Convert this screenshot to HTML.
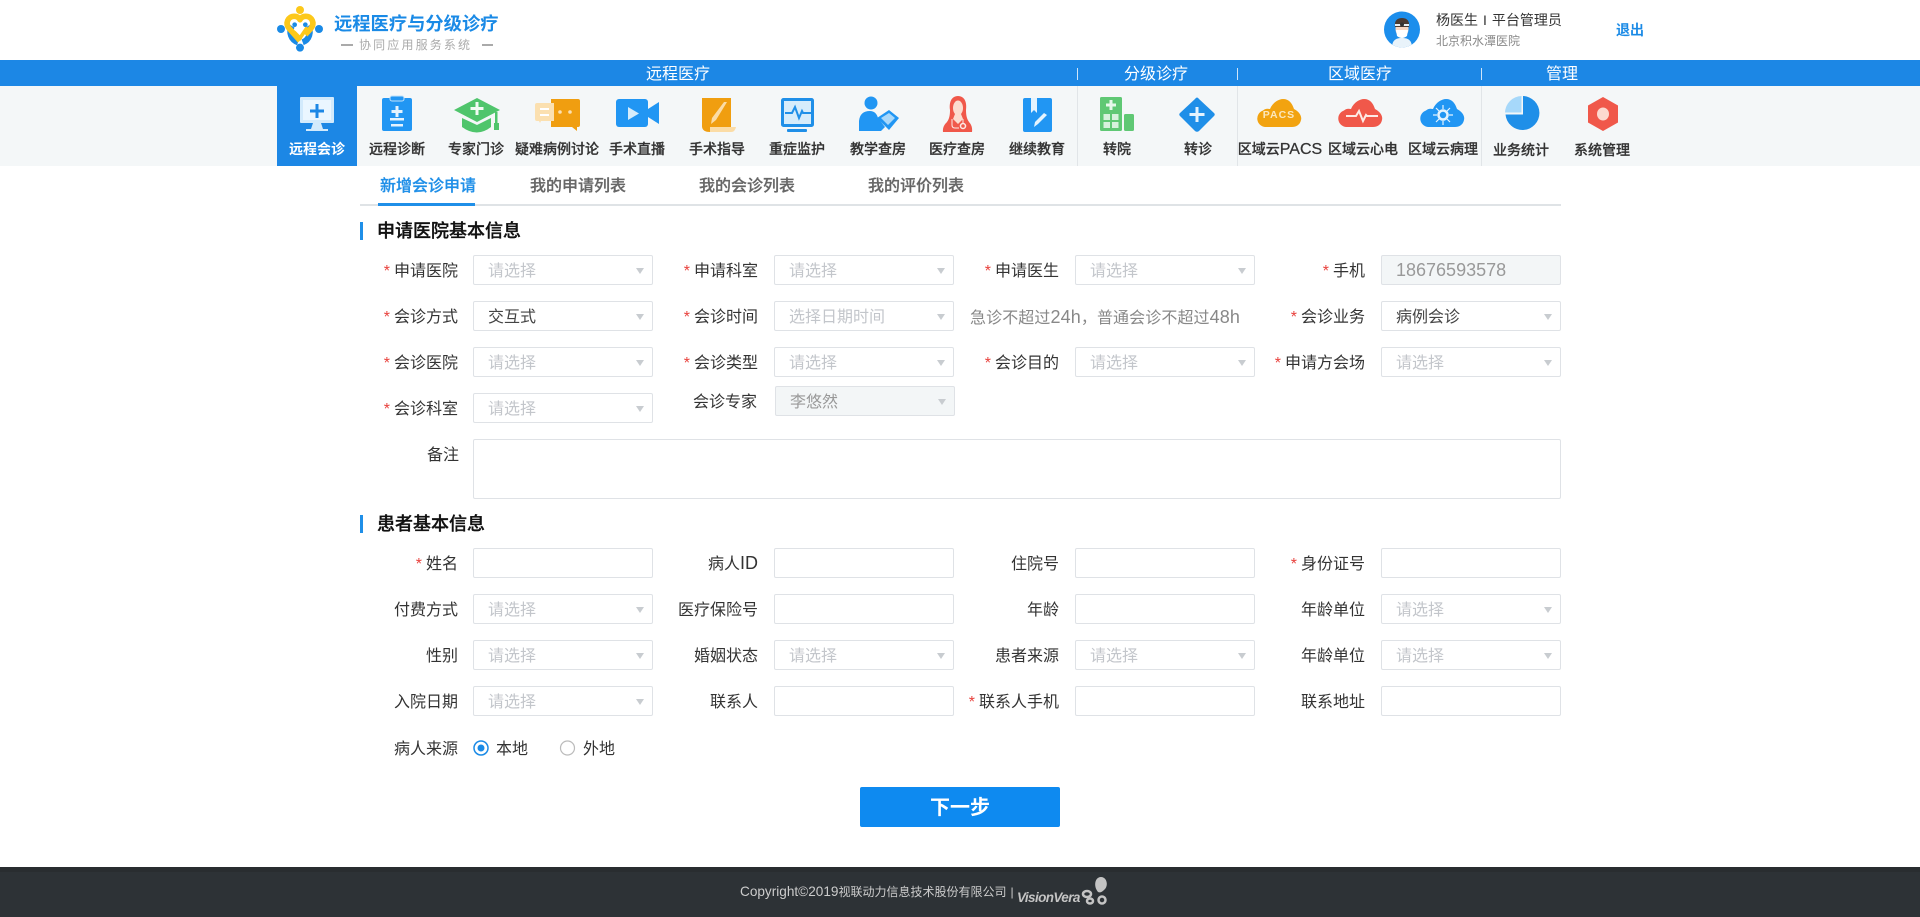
<!DOCTYPE html>
<html lang="zh-CN"><head><meta charset="utf-8"><title>远程医疗与分级诊疗</title>
<style>
*{box-sizing:border-box}
html,body{margin:0;padding:0;background:#fff}
body{width:1920px;height:917px;position:relative;overflow:hidden;font-family:"Liberation Sans","Noto Sans CJK SC",sans-serif;font-size:16px;color:#333}
.a{position:absolute;white-space:nowrap}
#bar{left:0;top:60px;width:1920px;height:26px;background:#1c87e5}
#nav{left:0;top:86px;width:1920px;height:80px;background:#f4f7f8}
#act{left:277px;top:86px;width:80px;height:80px;background:#1c87e5}
.sep{position:absolute;width:1px;background:#e1e5e8;top:86px;height:80px}
.bs{position:absolute;width:1px;background:#cfe5f9;top:68px;height:12px}
.rg{position:absolute;top:60px;height:26px;line-height:29px;color:#fff;font-size:16px;width:100px;text-align:center}
.n{position:absolute;top:139px;height:20px;line-height:20px;width:90px;text-align:center;font-size:14px;font-weight:500;color:#333;white-space:nowrap;-webkit-text-stroke:.25px #333}
.n b{font-weight:500;font-size:16px}
.t{position:absolute;top:175px;line-height:24px;font-size:16px;color:#666;font-weight:500;white-space:nowrap;-webkit-text-stroke:.25px currentColor}
.h{position:absolute;left:377px;font-size:18px;line-height:24px;color:#111;font-weight:500;white-space:nowrap;-webkit-text-stroke:.35px #111}
.hb{position:absolute;left:360px;width:3px;height:18px;background:#1f8fe8}
.l{position:absolute;height:30px;line-height:30px;text-align:right;white-space:nowrap;color:#333;margin-top:2px}
.l i{font-style:normal;color:#e8413c;margin-right:4px}
.l b{font-weight:400;font-size:18px;line-height:1}
.l1{left:300px;width:158px}.l2{left:600px;width:158px}.l3{left:900px;width:159px}.l4{left:1200px;width:165px}
.f{position:absolute;width:180px;height:30px;border:1px solid #dfe2e6;border-radius:2px;background:#fff;padding-left:14px;line-height:32px;color:#c3c6cb;white-space:nowrap}
.i1{left:473px}.i2{left:774px}.i3{left:1075px}.i4{left:1381px}
.v{color:#444}
.s:after{content:"";position:absolute;right:8px;top:12px;border-left:4.5px solid transparent;border-right:4.5px solid transparent;border-top:6px solid #c8ccd0}
.d{background:#f3f6f7;color:#999}
</style></head>
<body>

<div class="a" style="left:334px;top:12px;font-size:18.3px;line-height:24px;font-weight:700;color:#1a8ae6">远程医疗与分级诊疗</div>
<div class="a" style="left:359px;top:37px;font-size:12px;line-height:16px;letter-spacing:2.15px;color:#aaa">协同应用服务系统</div>
<div class="a" style="left:341px;top:44px;width:12px;height:2px;background:#aaa"></div>
<div class="a" style="left:482px;top:44px;width:11px;height:2px;background:#aaa"></div>
<div class="a" style="left:1436px;top:10px;font-size:14px;line-height:20px;color:#333">杨医生<span style="font-family:'Liberation Sans';margin:0 5px">I</span>平台管理员</div>
<div class="a" style="left:1436px;top:33px;font-size:12px;line-height:16px;color:#888">北京积水潭医院</div>
<div class="a" style="left:1616px;top:20px;font-size:14px;line-height:20px;font-weight:500;color:#1a8ae6;-webkit-text-stroke:.3px #1a8ae6">退出</div>

<div class="a" id="bar"></div>
<div class="a" id="nav"></div>
<div class="a" id="act"></div>
<div class="sep" style="left:1077px"></div><div class="sep" style="left:1237px"></div><div class="sep" style="left:1481px"></div>
<div class="bs" style="left:1077px"></div><div class="bs" style="left:1237px"></div><div class="bs" style="left:1481px"></div>
<div class="rg" style="left:628px">远程医疗</div>
<div class="rg" style="left:1106px">分级诊疗</div>
<div class="rg" style="left:1310px">区域医疗</div>
<div class="rg" style="left:1512px">管理</div>

<div class="n" style="left:272px;color:#fff;font-weight:700;-webkit-text-stroke:0">远程会诊</div>
<div class="n" style="left:352px">远程诊断</div>
<div class="n" style="left:431px">专家门诊</div>
<div class="n" style="left:512px">疑难病例讨论</div>
<div class="n" style="left:592px">手术直播</div>
<div class="n" style="left:672px">手术指导</div>
<div class="n" style="left:752px">重症监护</div>
<div class="n" style="left:833px">教学查房</div>
<div class="n" style="left:912px">医疗查房</div>
<div class="n" style="left:992px">继续教育</div>
<div class="n" style="left:1072px">转院</div>
<div class="n" style="left:1153px">转诊</div>
<div class="n" style="left:1235px">区域云<b>PACS</b></div>
<div class="n" style="left:1318px">区域云心电</div>
<div class="n" style="left:1398px">区域云病理</div>
<div class="n" style="left:1476px;top:140px">业务统计</div>
<div class="n" style="left:1557px;top:140px">系统管理</div>

<div class="a" style="left:360px;top:204px;width:1201px;height:2px;background:#dfe3e6"></div>
<div class="a" style="left:378px;top:203px;width:97px;height:3px;background:#1f8fe8"></div>
<div class="t" style="left:380px;color:#1f8fe8">新增会诊申请</div>
<div class="t" style="left:530px">我的申请列表</div>
<div class="t" style="left:699px">我的会诊列表</div>
<div class="t" style="left:868px">我的评价列表</div>

<div class="hb" style="top:222px"></div>
<div class="h" style="top:219px">申请医院基本信息</div>

<div class="l l1" style="top:255px"><i>*</i>申请医院</div><div class="f s i1" style="top:255px">请选择</div>
<div class="l l2" style="top:255px"><i>*</i>申请科室</div><div class="f s i2" style="top:255px">请选择</div>
<div class="l l3" style="top:255px"><i>*</i>申请医生</div><div class="f s i3" style="top:255px">请选择</div>
<div class="l l4" style="top:255px"><i>*</i>手机</div><div class="f d i4" style="top:255px;font-size:18px;line-height:29px">18676593578</div>

<div class="l l1" style="top:301px"><i>*</i>会诊方式</div><div class="f s i1 v" style="top:301px">交互式</div>
<div class="l l2" style="top:301px"><i>*</i>会诊时间</div><div class="f s i2" style="top:301px">选择日期时间</div>
<div class="a" style="left:970px;top:304px;line-height:30px;color:#888;letter-spacing:.1px">急诊不超过<span style="font-size:18px;line-height:1">24h</span>，普通会诊不超过<span style="font-size:18px;line-height:1">48h</span></div>
<div class="l l4" style="top:301px"><i>*</i>会诊业务</div><div class="f s i4 v" style="top:301px">病例会诊</div>

<div class="l l1" style="top:347px"><i>*</i>会诊医院</div><div class="f s i1" style="top:347px">请选择</div>
<div class="l l2" style="top:347px"><i>*</i>会诊类型</div><div class="f s i2" style="top:347px">请选择</div>
<div class="l l3" style="top:347px"><i>*</i>会诊目的</div><div class="f s i3" style="top:347px">请选择</div>
<div class="l l4" style="top:347px"><i>*</i>申请方会场</div><div class="f s i4" style="top:347px">请选择</div>

<div class="l l1" style="top:393px"><i>*</i>会诊科室</div><div class="f s i1" style="top:393px">请选择</div>
<div class="l l2" style="top:386px;left:599px">会诊专家</div><div class="f s d" style="top:386px;left:775px">李悠然</div>

<div class="l" style="left:400px;width:59px;top:439px">备注</div>
<div class="f" style="left:473px;top:439px;width:1088px;height:60px"></div>

<div class="hb" style="top:515px"></div>
<div class="h" style="top:512px">患者基本信息</div>

<div class="l l1" style="top:548px"><i>*</i>姓名</div><div class="f i1" style="top:548px"></div>
<div class="l l2" style="top:548px">病人<b>ID</b></div><div class="f i2" style="top:548px"></div>
<div class="l l3" style="top:548px">住院号</div><div class="f i3" style="top:548px"></div>
<div class="l l4" style="top:548px"><i>*</i>身份证号</div><div class="f i4" style="top:548px"></div>

<div class="l l1" style="top:594px">付费方式</div><div class="f s i1" style="top:594px">请选择</div>
<div class="l l2" style="top:594px">医疗保险号</div><div class="f i2" style="top:594px"></div>
<div class="l l3" style="top:594px">年龄</div><div class="f i3" style="top:594px"></div>
<div class="l l4" style="top:594px">年龄单位</div><div class="f s i4" style="top:594px">请选择</div>

<div class="l l1" style="top:640px">性别</div><div class="f s i1" style="top:640px">请选择</div>
<div class="l l2" style="top:640px">婚姻状态</div><div class="f s i2" style="top:640px">请选择</div>
<div class="l l3" style="top:640px">患者来源</div><div class="f s i3" style="top:640px">请选择</div>
<div class="l l4" style="top:640px">年龄单位</div><div class="f s i4" style="top:640px">请选择</div>

<div class="l l1" style="top:686px">入院日期</div><div class="f s i1" style="top:686px">请选择</div>
<div class="l l2" style="top:686px">联系人</div><div class="f i2" style="top:686px"></div>
<div class="l l3" style="top:686px"><i>*</i>联系人手机</div><div class="f i3" style="top:686px"></div>
<div class="l l4" style="top:686px">联系地址</div><div class="f i4" style="top:686px"></div>

<div class="l l1" style="top:733px">病人来源</div>
<div class="a" style="left:496px;top:735px;line-height:30px">本地</div>
<div class="a" style="left:583px;top:735px;line-height:30px">外地</div>

<div class="a" style="left:860px;top:787px;width:200px;height:40px;background:#0e8af0;border-radius:2px;color:#fff;font-size:20px;font-weight:700;text-align:center;line-height:42px">下一步</div>

<div class="a" style="left:0;top:867px;width:1920px;height:50px;background:#2d3236;border-top:5px solid #292d30"></div>
<div class="a" style="left:740px;top:882px;line-height:20px;color:#ccc;font-size:12px"><span style="font-size:13.6px">Copyright©2019</span>视联动力信息技术股份有限公司<span style="margin-left:4px">|</span></div>
<div class="a" style="left:1017px;top:889px;line-height:18px;color:#c4c4c4;font-size:13.5px;font-weight:700;font-style:italic;letter-spacing:-.6px">VisionVera</div>

<svg class="a" style="left:0;top:0;pointer-events:none" width="1920" height="917" viewBox="0 0 1920 917" xmlns="http://www.w3.org/2000/svg">
<!-- logo -->
<g transform="translate(270 0) scale(.3333)">
<circle cx="90" cy="30" r="12" fill="#fcc81a"/>
<circle cx="33" cy="87" r="12" fill="#1a8ae6"/><circle cx="147" cy="87" r="12" fill="#1a8ae6"/><circle cx="90" cy="143" r="12" fill="#1a8ae6"/>
<path d="M66 78A33 33 0 0 0 84 127M114 78A33 33 0 0 1 98 127" fill="none" stroke="#1a8ae6" stroke-width="18"/>
<path d="M90 122L58 86C44 70 54 49 73 49C81 49 87 53 90 59C93 53 99 49 107 49C126 49 136 70 122 86L106 104" fill="none" stroke="#fcc81a" stroke-width="17" stroke-linejoin="round"/>
<path d="M72 96L90 114L112 82" fill="none" stroke="#fcc81a" stroke-width="11"/>
<circle cx="74" cy="74" r="7" fill="#1a8ae6"/><circle cx="106" cy="74" r="7" fill="#1a8ae6"/>
</g>
<!-- avatar -->
<defs><clipPath id="av"><circle cx="1402" cy="29.500" r="18"/></clipPath></defs>
<circle cx="1402" cy="29.500" r="18" fill="#1c8eec"/>
<g clip-path="url(#av)">
<path d="M1392 48C1392 40 1396 38 1402 38C1408 38 1412 40 1412 48Z" fill="#e9f3fa"/>
<ellipse cx="1402" cy="29" rx="6.500" ry="8" fill="#f7d6c2"/>
<path d="M1395 27C1394 20 1398 18 1402 18C1406 18 1410 20 1409 27Z" fill="#4a3a32"/>
<rect x="1395" y="24" width="14" height="2" fill="#e6eef4"/><circle cx="1402" cy="24.500" r="2" fill="#333"/>
<path d="M1396 30L1408 30L1407 36Q1402 40 1397 36Z" fill="#fff"/>
</g>
<!-- 1 monitor active -->
<rect x="300" y="97" width="34" height="26" rx="1" fill="#d2eafc"/><rect x="303" y="100" width="28" height="20" fill="#eaf6ff"/>
<path d="M315.500 104h3v5.500h5.500v3h-5.500v5.500h-3v-5.500h-5.500v-3h5.500z" fill="#1c87e5"/>
<path d="M313 123h8l2 6h5v2h-22v-2h5z" fill="#d2eafc"/>
<!-- 2 clipboard -->
<rect x="382" y="98" width="30" height="33" rx="2" fill="#2196f3"/><rect x="390" y="96" width="14" height="5" rx="2" fill="#2196f3" stroke="#bfe1fb"/>
<path d="M395.500 106h3v4h4v3h-4v4h-3v-4h-4v-3h4z" fill="#e4f3fe"/><rect x="390" y="118" width="14" height="2.500" fill="#e4f3fe"/><rect x="391" y="124" width="12" height="2.500" fill="#e4f3fe"/>
<!-- 3 cap -->
<path d="M454 110L477 98L500 110L477 122Z" fill="#4fc56c"/>
<path d="M462 118L477 125L491 118V127Q477 138 462 127Z" fill="#4fc56c"/>
<path d="M495 112h2.500v11h1.500v7h-5v-7h1z" fill="#4fc56c"/>
<path d="M475.500 102h3v5h5v3h-5v5h-3v-5h-5v-3h5z" fill="#f2fbf4"/>
<!-- 4 chat -->
<path d="M551 99h27a2 2 0 0 1 2 2v24a2 2 0 0 1-2 2h-1v4l-5-4h-21z" fill="#f09e10"/>
<path d="M537 103h17v18h-13l-1 2-1-2h-2a2 2 0 0 1-2-2v-14a2 2 0 0 1 2-2z" fill="#fbe0b0"/>
<rect x="540" y="108" width="9" height="2" fill="#fff"/><rect x="540" y="114" width="9" height="2" fill="#fff"/>
<circle cx="560" cy="112" r="1.800" fill="#fbe0b0"/><circle cx="570" cy="112" r="1.800" fill="#fbe0b0"/>
<!-- 5 video -->
<rect x="616" y="99" width="32" height="28" rx="3" fill="#2196f3"/><path d="M648 109L659 102V124L648 117Z" fill="#2196f3"/>
<path d="M628 107L639 113.500L628 120Z" fill="#d6ecfb"/>
<!-- 6 scroll -->
<path d="M702 98h29v29h-21v5q-8 0-8-6z" fill="#f09e10"/>
<path d="M710 127h26q-1 5-5 5h-21z" fill="#fbdca6"/>
<path d="M727 102L716 120L711 124L712 118L724 102Z" fill="#fbdca6"/>
<!-- 7 monitor -->
<rect x="782.500" y="99.500" width="30" height="26" rx="1" fill="#d6ecfb" stroke="#1f8fe8" stroke-width="3"/>
<path d="M785 113h7l3-6 4 11 3-7 1 2h8" fill="none" stroke="#1f8fe8" stroke-width="2"/>
<rect x="787" y="129" width="20" height="3" rx="1" fill="#1f8fe8"/>
<!-- 8 teaching -->
<circle cx="871" cy="103" r="6.500" fill="#2196f3"/>
<path d="M859 131V121Q860 111 870 111Q876 111 878 118L885 127L881 131Z" fill="#2196f3"/>
<path d="M877 118L889 110L899 118L889 130Z" fill="#2196f3"/><path d="M881 118L889 113L895 118L888 125Z" fill="#a9d8fa"/>
<!-- 9 female doctor -->
<path d="M958 96C951 96 949 103 950 110C950 116 949 119 947 122H969C967 119 966 116 966 110C967 103 965 96 958 96Z" fill="#f0584a"/>
<path d="M943 132C942 124 949 120 953 119H963C968 120 973 124 972 132Z" fill="#f0584a"/>
<ellipse cx="958" cy="108" rx="5" ry="7.500" fill="#fcdccf"/>
<path d="M955 114H961L963 119L958 124L953 119Z" fill="#fcdccf"/>
<circle cx="963" cy="126" r="2.500" fill="none" stroke="#fdeae6" stroke-width="1.500"/>
<path d="M952 119v6q0 3 3 3h4M963 119v4" fill="none" stroke="#fdeae6" stroke-width="1"/>
<!-- 10 book -->
<rect x="1023" y="98" width="29" height="34" rx="2" fill="#2196f3"/>
<path d="M1031 98h6v15l-3-3-3 3z" fill="#e4f3fe"/>
<path d="M1047 115L1038 124L1034 127L1035 122L1044 113Z" fill="#e4f3fe"/>
<!-- 11 hospital -->
<rect x="1100" y="97" width="22" height="34" rx="1.500" fill="#5fc874"/><rect x="1124" y="114" width="10" height="17" rx="1.500" fill="#5fc874"/>
<path d="M1109.500 100h3v3.500h3.500v3h-3.500v3.500h-3v-3.500h-3.500v-3h3.500z" fill="#e6f8ea"/>
<g fill="#d6f2dc"><rect x="1103.500" y="114" width="6.500" height="6"/><rect x="1112" y="114" width="6.500" height="6"/><rect x="1103.500" y="122" width="6.500" height="6"/><rect x="1112" y="122" width="6.500" height="6"/></g>
<!-- 12 diamond -->
<path d="M1197 97.500Q1198 97.500 1199 99L1214 113Q1215.500 114.500 1214 116L1199 131Q1197 132.500 1195 131L1180 116Q1178.500 114.500 1180 113L1195 99Q1196 97.500 1197 97.500Z" fill="#1f8fe8"/>
<path d="M1195.500 107h3v6h6v3h-6v6h-3v-6h-6v-3h6z" fill="#e4f3fe"/>
<!-- clouds -->
<path d="M1265 127A8.500 8.500 0 0 1 1263 110.500C1266 108 1268 109 1270 109C1273 102 1279 99 1283 99C1289 99 1292 103 1294 109C1300 112 1302 117 1301 120C1300 125 1296 127 1292 127Z" fill="#f2a310"/>
<text x="1279" y="118" text-anchor="middle" font-family="Liberation Sans" font-weight="700" font-size="10.500" letter-spacing="1" fill="#fbe7bd">PACS</text>
<path d="M1346 127A8.500 8.500 0 0 1 1344 110.500C1347 108 1349 109 1351 109C1354 102 1360 99 1364 99C1370 99 1373 103 1375 109C1381 112 1383 117 1382 120C1381 125 1377 127 1373 127Z" fill="#f0584a"/>
<path d="M1346 116h10l3-5 4 10 3-6 1 1h11" fill="none" stroke="#fdeae6" stroke-width="2"/>
<path d="M1428 127A8.500 8.500 0 0 1 1426 110.500C1429 108 1431 109 1433 109C1436 102 1442 99 1446 99C1452 99 1455 103 1457 109C1463 112 1465 117 1464 120C1463 125 1459 127 1455 127Z" fill="#2196f3"/>
<circle cx="1443" cy="115" r="4.500" fill="none" stroke="#e4f3fe" stroke-width="2.500"/>
<path d="M1443 105v4M1443 121v4M1433 115h4M1449 115h4M1436 108l3 3M1447 119l3 3M1450 108l-3 3M1439 119l-3 3" stroke="#e4f3fe" stroke-width="1.200"/>
<!-- pie -->
<path d="M1521.500 96A17 17 0 0 0 1505 112.500H1521.500Z" fill="#a6d8fa"/>
<path d="M1523 96A17 17 0 1 1 1505.500 114.500H1523Z" fill="#1f8fe8"/>
<!-- hex -->
<path d="M1603 97L1618 105.500V122.500L1603 131L1588 122.500V105.500Z" fill="#f0584a"/><ellipse cx="1603" cy="114" rx="6" ry="6.500" fill="#fcd9cf"/>
<!-- radios -->
<circle cx="481" cy="748" r="7" fill="#fff" stroke="#1a8ae6" stroke-width="1.500"/><circle cx="481" cy="748" r="3.500" fill="#1a8ae6"/>
<circle cx="567.500" cy="748" r="7" fill="#fff" stroke="#bbb" stroke-width="1.200"/>
<!-- footer flower -->
<path d="M1098 892C1093 886 1095 877 1101 877C1107 877 1109 886 1104 890C1102 892 1100 893 1098 892Z" fill="#c4c4c4"/>
<g fill="none" stroke="#c4c4c4" stroke-width="2.500"><ellipse cx="1087" cy="894" rx="4" ry="3"/><circle cx="1102" cy="900" r="3.500"/><ellipse cx="1090" cy="901" rx="3" ry="2.500"/></g>
</svg>
</body></html>
